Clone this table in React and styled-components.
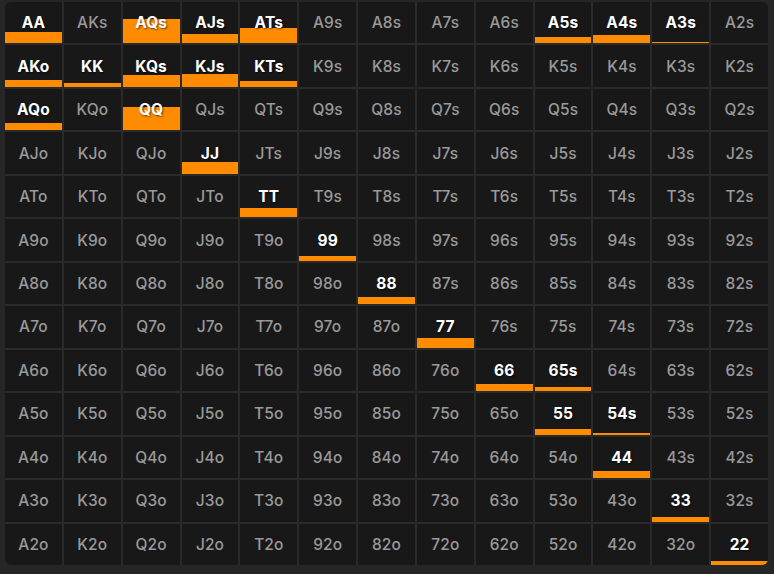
import React from "react";
import styled, { createGlobalStyle } from "styled-components";

const GlobalStyle = createGlobalStyle`
  html, body {
    margin: 0;
    padding: 0;
    background: #262626;
    font-family: Inter, "Noto Sans", sans-serif;
  }
`;

const Page = styled.div`
  padding: 2px 0 0 5px;
`;

const Grid = styled.div`
  display: grid;
  grid-template-columns: repeat(13, 1fr);
  grid-template-rows: repeat(13, 1fr);
  gap: 2px;
  width: 763px;
  height: 563px;
  background: #2a2a2a;
  border-radius: 6px;
  overflow: hidden;
`;

const Cell = styled.div`
  position: relative;
  display: flex;
  align-items: center;
  justify-content: center;
  background: #181818;
  overflow: hidden;
`;

const Bar = styled.div`
  position: absolute;
  left: 0;
  right: 0;
  bottom: 0;
  background: #ff8c00;
`;

const Label = styled.span`
  position: relative;
  font-size: 15.5px;
  letter-spacing: 0.1px;
  font-weight: ${(p) => (p.$active ? 700 : 500)};
  color: ${(p) => (p.$active ? "#ffffff" : "#9a9a9a")};
  text-shadow: ${(p) => (p.$active ? "1px 1px 2px rgba(0,0,0,0.6)" : "none")};
`;

const ranks = "AKQJT98765432";

// bar height as share of the cell
const freq = {
  AA: 28, AQs: 60, AJs: 23, ATs: 38, A5s: 16, A4s: 21, A3s: 4,
  AKo: 17, KK: 10, KQs: 29, KJs: 31, KTs: 14,
  AQo: 18, QQ: 57,
  JJ: 28, TT: 22, "99": 12, "88": 18, "77": 24,
  "66": 17, "65s": 10, "55": 14, "54s": 3, "44": 17, "33": 11, "22": 9,
};

const handName = (i, j) => {
  if (i === j) return ranks[i] + ranks[j];
  if (j > i) return ranks[i] + ranks[j] + "s";
  return ranks[j] + ranks[i] + "o";
};

const App = () => {
  const cells = [];
  for (let i = 0; i < 13; i++) {
    for (let j = 0; j < 13; j++) {
      const name = handName(i, j);
      const f = freq[name];
      cells.push(
        <Cell key={name}>
          {f && <Bar style={{ height: f + "%" }} />}
          <Label $active={!!f}>{name}</Label>
        </Cell>
      );
    }
  }

  return (
    <>
      <GlobalStyle />
      <Page>
        <Grid>{cells}</Grid>
      </Page>
    </>
  );
};

export default App;
